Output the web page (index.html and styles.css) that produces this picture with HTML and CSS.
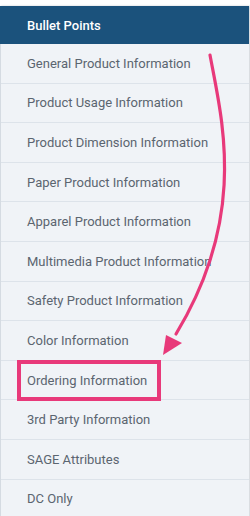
FILE: index.html
```html
<!DOCTYPE html>
<html lang="en">
<head>
    <meta charset="UTF-8">
    <title>Sections</title>
    <link rel="stylesheet" href="styles.css">
</head>
<body>

<div class="panel">
    <ul class="menu">
        <li class="menu-item active">Bullet Points</li>
        <li class="menu-item">General Product Information</li>
        <li class="menu-item">Product Usage Information</li>
        <li class="menu-item">Product Dimension Information</li>
        <li class="menu-item">Paper Product Information</li>
        <li class="menu-item">Apparel Product Information</li>
        <li class="menu-item">Multimedia Product Information</li>
        <li class="menu-item">Safety Product Information</li>
        <li class="menu-item">Color Information</li>
        <li class="menu-item"><span class="highlight">Ordering Information</span></li>
        <li class="menu-item">3rd Party Information</li>
        <li class="menu-item">SAGE Attributes</li>
        <li class="menu-item">DC Only</li>
    </ul>

    <!-- annotation arrow drawn over the list -->
    <svg class="arrow" width="250" height="516" viewBox="0 0 250 516">
        <path d="M210 55 C222 120 248 215 176 334" fill="none" stroke="#e8397a" stroke-width="3.2" stroke-linecap="round"/>
        <polygon points="163,355 182,343 166,335" fill="#e8397a"/>
    </svg>
</div>

</body>
</html>
```

FILE: styles.css
```css
body { margin: 0; background: #fff; font-family: Roboto, "Liberation Sans", sans-serif; }
.panel { position: relative; width: 250px; height: 516px; overflow: hidden; padding-top: 6px; box-sizing: border-box; }
.menu { list-style: none; margin: 0; padding: 0; width: 248px; background: #f0f3f7; border-left: 1px solid #d5dbe2; box-shadow: 1px 0 2px #c9ced4; }
.menu-item { display: flex; align-items: center; height: 39.6px; box-sizing: border-box; padding-left: 26px; font-size: 13px; color: #5b6570; border-bottom: 1px solid #dde3ea; white-space: nowrap; }
.menu-item.active { height: 38px; margin-left: -1px; padding-left: 27px; background: #1b527c; color: #fff; font-weight: 500; border-bottom: none; }
.highlight { margin-left: -10px; padding: 9px 10px 9px 6px; border: 4px solid #e8397a; }
.arrow { position: absolute; left: 0; top: 0; pointer-events: none; }
```
